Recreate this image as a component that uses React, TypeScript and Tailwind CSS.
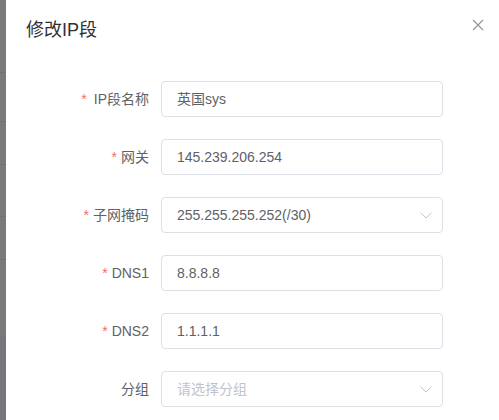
const fields = [
  { label: "IP段名称", value: "英国sys", required: true, spaced: true },
  { label: "网关", value: "145.239.206.254", required: true },
  { label: "子网掩码", value: "255.255.255.252(/30)", required: true, select: true },
  { label: "DNS1", value: "8.8.8.8", required: true },
  { label: "DNS2", value: "1.1.1.1", required: true },
  { label: "分组", placeholder: "请选择分组", select: true },
];

const Chevron = () => (
  <svg width="12" height="7" viewBox="0 0 12 7" fill="none" className="shrink-0">
    <path d="M0.5 0.8 L6 6 L11.5 0.8" stroke="#c0c4cc" strokeWidth="1" />
  </svg>
);

const App = () => {
  return (
    <div
      className="flex h-[420px] w-[499px] overflow-hidden bg-white"
      style={{ fontFamily: '"Liberation Sans", "Noto Sans CJK SC", sans-serif' }}
    >
      {/* backdrop edge */}
      <div className="flex w-[6px] shrink-0 flex-col bg-[#7a7a7a]">
        <div className="h-[73px] border-b border-[#707070]" />
        <div className="h-[49px] border-b border-[#717171]" />
        <div className="h-[43px] border-b border-[#717171]" />
        <div className="h-[52px] border-b border-[#717171]" />
        <div className="h-[43px] border-b border-[#717171]" />
        <div className="h-[77px]" />
        <div className="flex-1 bg-[#76767b]" />
      </div>

      <div className="flex flex-1 flex-col">
        <div className="flex h-[58px] items-start justify-between pl-5 pr-[15px] pt-[18px]">
          <span className="text-[18px] leading-6 text-[#303133]">修改IP段</span>
          <svg width="12" height="12" viewBox="0 0 12 12" className="mt-[1px]">
            <path d="M1 1 L11 11 M11 1 L1 11" stroke="#909399" strokeWidth="1.1" />
          </svg>
        </div>

        <div className="mt-[23px] flex flex-col gap-[22px]">
          {fields.map((f) => (
            <div key={f.label} className="flex items-center">
              <label className="w-[155px] shrink-0 pr-3 text-right text-[14px] text-[#606266]">
                {f.required && (
                  <span className={`text-[#f56c6c] ${f.spaced ? "mr-[7px]" : "mr-[4px]"}`}>*</span>
                )}
                {f.label}
              </label>
              <div className="flex h-[36px] w-[282px] items-center justify-between rounded-[4px] border border-[#dcdfe6] pl-[15px] pr-[10px]">
                {f.value ? (
                  <span className="text-[14px] text-[#606266]">{f.value}</span>
                ) : (
                  <span className="text-[14px] text-[#c0c4cc]">{f.placeholder}</span>
                )}
                {f.select && <Chevron />}
              </div>
            </div>
          ))}
        </div>
      </div>
    </div>
  );
};

export default App;
